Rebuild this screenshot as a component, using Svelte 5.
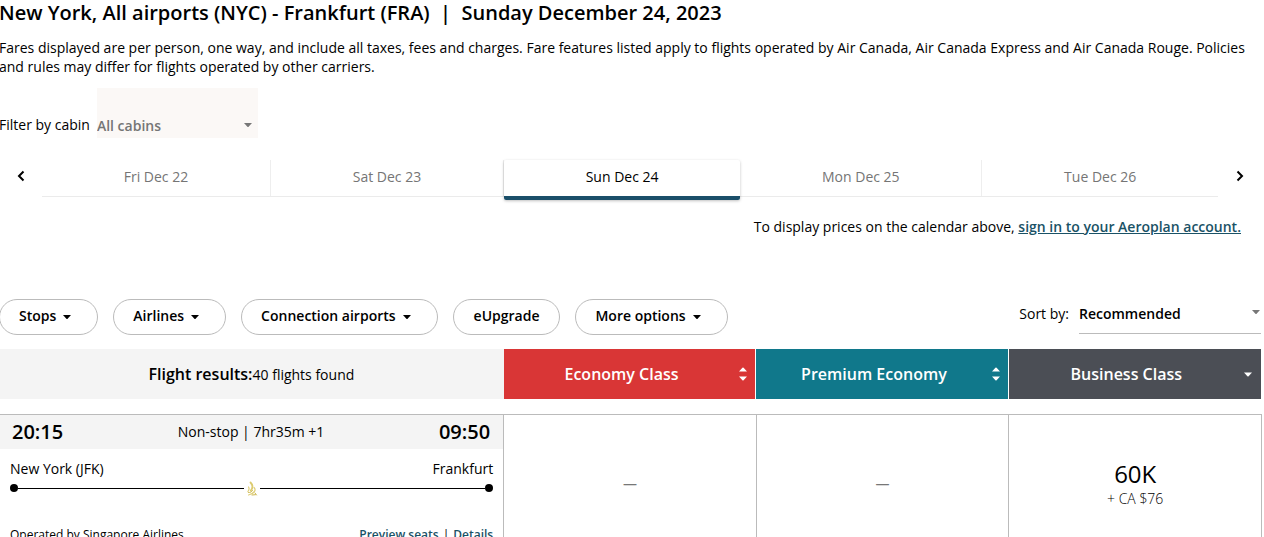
<script lang="ts">
  type Sort = 'both' | 'down';

  const days = ['Fri Dec 22', 'Sat Dec 23', 'Sun Dec 24', 'Mon Dec 25', 'Tue Dec 26'];
  let selectedDay = $state('Sun Dec 24');

  const filters = [
    { label: 'Stops', menu: true },
    { label: 'Airlines', menu: true },
    { label: 'Connection airports', menu: true },
    { label: 'eUpgrade', menu: false },
    { label: 'More options', menu: true }
  ];

  const cabins: { name: string; tone: string; sort: Sort }[] = [
    { name: 'Economy Class', tone: 'economy', sort: 'both' },
    { name: 'Premium Economy', tone: 'premium', sort: 'both' },
    { name: 'Business Class', tone: 'business', sort: 'down' }
  ];

  const fares = [null, null, { points: '60K', cash: '+ CA $76' }];

  let cabin = $state('All cabins');
  let sortBy = $state('Recommended');
</script>

{#snippet caret()}
  <svg class="caret" width="8" height="4" viewBox="0 0 8 4" aria-hidden="true">
    <path d="M0 0h8L4.6 3.7q-.6.5-1.2 0z" fill="currentColor" />
  </svg>
{/snippet}

<main class="page">
  <h1>New York, All airports (NYC) - Frankfurt (FRA) &nbsp;|&nbsp; Sunday December 24, 2023</h1>
  <p class="intro">
    Fares displayed are per person, one way, and include all taxes, fees and charges. Fare features listed apply to flights operated by Air Canada, Air Canada Express and Air Canada Rouge. Policies and rules may differ for flights operated by other carriers.
  </p>

  <div class="cabin-filter">
    <label for="cabin">Filter by cabin</label>
    <div class="select cabin-select">
      <select id="cabin" bind:value={cabin}>
        <option>All cabins</option>
        <option>Economy</option>
        <option>Business</option>
      </select>
      {@render caret()}
    </div>
  </div>

  <nav class="calendar">
    <button class="arrow" aria-label="Previous days">
      <svg width="8" height="12" viewBox="0 0 8 12" fill="none" stroke="currentColor" stroke-width="2">
        <path d="M6.5 1.5L2 6l4.5 4.5" />
      </svg>
    </button>
    <div class="days">
      {#each days as day}
        <button class="day" class:selected={day === selectedDay} onclick={() => (selectedDay = day)}>{day}</button>
      {/each}
    </div>
    <button class="arrow" aria-label="Next days">
      <svg width="8" height="12" viewBox="0 0 8 12" fill="none" stroke="currentColor" stroke-width="2">
        <path d="M1.5 1.5L6 6l-4.5 4.5" />
      </svg>
    </button>
  </nav>

  <p class="sign-in">To display prices on the calendar above, <a href="#sign-in">sign in to your Aeroplan account.</a></p>

  <div class="toolbar">
    <div class="filters">
      {#each filters as filter}
        <button class="pill" class:plain={!filter.menu}>
          {filter.label}
          {#if filter.menu}{@render caret()}{/if}
        </button>
      {/each}
    </div>
    <div class="sort">
      <label for="sort">Sort by:</label>
      <div class="select sort-select">
        <select id="sort" bind:value={sortBy}>
          <option>Recommended</option>
          <option>Duration</option>
          <option>Departure time</option>
        </select>
        {@render caret()}
      </div>
    </div>
  </div>

  <div class="columns header">
    <div class="count"><strong>Flight results:</strong>40 flights found</div>
    {#each cabins as c}
      <button class="cabin {c.tone}">
        <span>{c.name}</span>
        {#if c.sort === 'both'}
          <svg width="8" height="14" viewBox="0 0 8 14" fill="currentColor" aria-hidden="true">
            <path d="M0 4.500L3.400.8q.6-.5 1.200 0L8 4.500zM0 9.500h8l-3.400 3.700q-.6.5-1.200 0z" />
          </svg>
        {:else}
          <svg width="8" height="14" viewBox="0 0 8 14" fill="currentColor" aria-hidden="true">
            <path d="M0 5.500h8L4.600 9.200q-.6.500-1.200 0z" />
          </svg>
        {/if}
      </button>
    {/each}
  </div>

  <article class="columns flight">
    <div class="details">
      <div class="times">
        <strong>20:15</strong>
        <span>Non-stop | 7hr35m +1</span>
        <strong>09:50</strong>
      </div>
      <div class="route">
        <div class="spread">
          <span>New York (JFK)</span>
          <span>Frankfurt</span>
        </div>
        <div class="track">
          <i class="dot"></i>
          <i class="line"></i>
          <svg width="16" height="18" viewBox="0 0 16 18" fill="none" stroke-linecap="round" aria-hidden="true">
            <path d="M6.500 3.500c2.500 2.500 2.800 5 .3 8" stroke="#dccb70" stroke-width="1.800" />
            <path d="M4.500 8c1 1.500.6 3-.6 4.500M10 8.500c2 2 1 4-1.500 6M4.500 16c3-.5 4.500-1.700 6-3.500" stroke="#e0cf78" stroke-width="1.200" />
            <path d="M4.500 13.500c2 .2 3-.6 4-2M11 14l1.500 2M8 16l3.500-.3" stroke="#cdb74f" />
          </svg>
          <i class="line"></i>
          <i class="dot"></i>
        </div>
        <div class="spread operated">
          <span>Operated by Singapore Airlines</span>
          <span class="links"><a href="#seats">Preview seats</a><span>|</span><a href="#details">Details</a></span>
        </div>
      </div>
    </div>
    {#each fares as fare}
      <div class="fare">
        {#if fare}
          <span class="points">{fare.points}</span>
          <span class="cash">{fare.cash}</span>
        {:else}
          <span class="none">—</span>
        {/if}
      </div>
    {/each}
  </article>
</main>

<style>
  :global(body) {
    background: #fff;
  }

  .page {
    box-sizing: border-box;
    height: 100vh;
    overflow: hidden;
    margin-left: -1px;
    padding-right: 3px;
    font-family: 'Open Sans', 'Noto Sans', sans-serif;
    font-size: 14px;
    line-height: 19px;
    color: #000;
  }

  button,
  select {
    margin: 0;
    padding: 0;
    border: 0;
    background: none;
    font: inherit;
    color: inherit;
    cursor: pointer;
  }

  svg {
    display: block;
    flex: none;
  }

  h1 {
    margin: 0 0 12px;
    font-size: 20px;
    line-height: 26px;
    font-weight: 600;
  }

  .intro {
    margin: 0;
  }

  .cabin-filter {
    display: flex;
    align-items: flex-end;
    gap: 7px;
    margin-top: 12px;
  }

  .cabin-filter label {
    padding-bottom: 4px;
  }

  .select {
    display: flex;
    align-items: center;
  }

  .select select {
    appearance: none;
    width: 100%;
    font-weight: 600;
    outline: none;
  }

  .select .caret {
    pointer-events: none;
    color: #777;
  }

  .cabin-select {
    box-sizing: border-box;
    width: 161px;
    height: 50px;
    padding: 24px 6px 0 0;
    background: #fbf8f6;
    color: #757575;
  }

  .cabin-select .caret {
    margin-left: -8px;
  }

  .calendar {
    display: flex;
    align-items: flex-start;
    margin-top: 22px;
  }

  .arrow {
    display: flex;
    align-items: center;
    justify-content: center;
    width: 43px;
    height: 32px;
  }

  .days {
    display: flex;
    flex: 1;
    height: 36px;
    border-bottom: 1px solid #ebebeb;
  }

  .day {
    flex: 1 1 auto;
    height: 36px;
    padding-bottom: 4px;
    border-right: 1px solid #eee;
    color: #757575;
  }

  .day:last-child {
    border-right: 0;
  }

  .day.selected {
    height: 40px;
    border-right: 0;
    border-bottom: 4px solid #1a4f69;
    border-radius: 2px;
    box-shadow: 0 1px 3px rgba(0, 0, 0, 0.25);
    color: #000;
  }

  .sign-in {
    margin: 20px 20px 0 0;
    text-align: right;
  }

  a {
    color: #1a5266;
    font-weight: 600;
  }

  .toolbar {
    display: flex;
    justify-content: space-between;
    margin-top: 63px;
    height: 50px;
  }

  .filters {
    display: flex;
    align-items: flex-start;
    gap: 15px;
  }

  .pill {
    display: flex;
    align-items: center;
    gap: 7px;
    box-sizing: border-box;
    height: 36px;
    padding: 0 26px 4px 19px;
    border: 1px solid #bbb;
    border-radius: 18px;
    font-weight: 600;
  }

  .pill.plain {
    padding: 0 20px 4px;
  }

  .pill .caret {
    margin-top: 4px;
  }

  .sort {
    display: flex;
    gap: 10px;
    line-height: 30px;
  }

  .sort-select {
    width: 182px;
    height: 34px;
    border-bottom: 1px solid #bbb;
  }

  .sort-select select {
    height: 30px;
    margin-bottom: 4px;
  }

  .sort-select .caret {
    margin: 0 1px 8px -9px;
  }

  .columns {
    display: grid;
    grid-template-columns: 2fr 1fr 1fr 1fr;
  }

  .header {
    height: 50px;
    font-size: 16px;
  }

  .count {
    display: flex;
    align-items: center;
    justify-content: center;
    background: #f4f4f4;
    font-size: 14px;
  }

  strong {
    font-weight: 600;
  }

  .count strong {
    font-size: 16px;
  }

  .cabin {
    display: flex;
    align-items: center;
    padding-right: 8px;
    border-right: 1px solid #fff;
    color: #fff;
    font-weight: 600;
  }

  .cabin:last-child {
    padding-right: 9px;
    border-right: 0;
  }

  .cabin span {
    flex: 1;
  }

  .economy {
    background: #d93636;
  }

  .premium {
    background: #10788b;
  }

  .business {
    background: #4b4e55;
  }

  .flight {
    margin: 15px -1px 0 0;
    border-top: 1px solid #bbb;
  }

  .details,
  .fare {
    border-right: 1px solid #bbb;
  }

  .times {
    display: flex;
    align-items: center;
    justify-content: space-between;
    box-sizing: border-box;
    height: 34px;
    padding: 0 13px 2px;
    background: #f4f4f4;
  }

  .times strong {
    font-size: 20px;
  }

  .route {
    padding: 10px 10px 8px 11px;
  }

  .spread {
    display: flex;
    justify-content: space-between;
  }

  .track {
    display: flex;
    align-items: center;
    height: 20px;
  }

  .dot {
    width: 8px;
    height: 8px;
    border-radius: 50%;
    background: #000;
  }

  .line {
    flex: 1;
    height: 1px;
    background: #000;
  }

  .operated {
    margin-top: 27px;
    font-size: 12px;
  }

  .links {
    display: flex;
    gap: 4px;
  }

  .links a {
    text-decoration: none;
  }

  .fare {
    display: flex;
    flex-direction: column;
    align-items: center;
    justify-content: center;
  }

  .points {
    font-size: 24px;
    line-height: 30px;
  }

  .cash {
    font-weight: 300;
  }

  .none {
    color: #777;
  }
</style>
